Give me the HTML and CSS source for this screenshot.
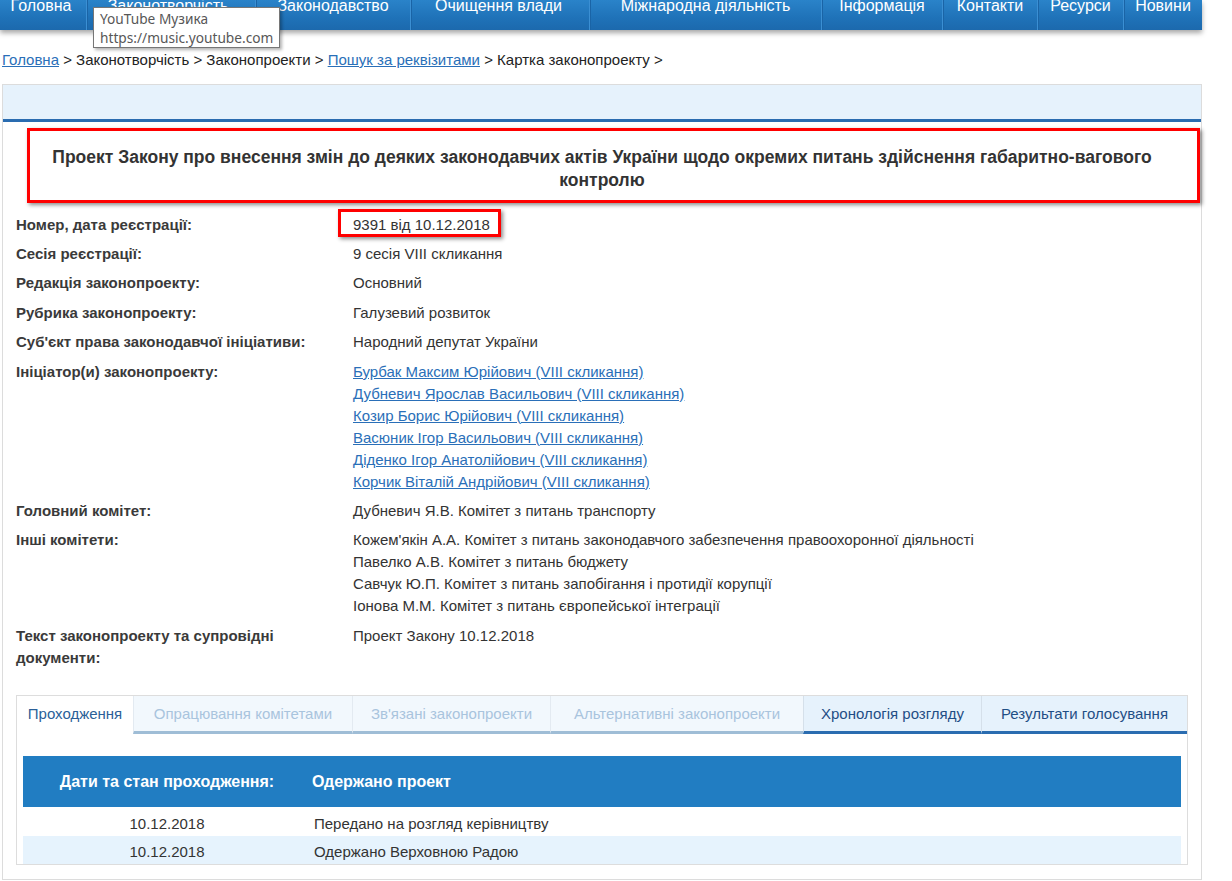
FILE: index.html
```html
<!DOCTYPE html>
<html lang="uk">
<head>
<meta charset="utf-8">
<title>Картка законопроекту</title>
<link rel="stylesheet" href="styles.css">
</head>
<body>
<div class="page">
  <nav class="topnav">
    <a class="nav-item">Головна</a>
    <a class="nav-item">Законотворчість</a>
    <a class="nav-item">Законодавство</a>
    <a class="nav-item">Очищення влади</a>
    <a class="nav-item">Міжнародна діяльність</a>
    <a class="nav-item">Інформація</a>
    <a class="nav-item">Контакти</a>
    <a class="nav-item">Ресурси</a>
    <a class="nav-item">Новини</a>
  </nav>

  <div class="tooltip">
    <div>YouTube Музика</div>
    <div>https://music.youtube.com</div>
  </div>

  <div class="breadcrumb">
    <a href="#">Головна</a> &gt; Законотворчість &gt; Законопроекти &gt; <a href="#">Пошук за реквізитами</a> &gt; Картка законопроекту &gt;
  </div>

  <div class="card">
    <div class="card-band"></div>
    <h1 class="bill-title">Проект Закону про внесення змін до деяких законодавчих актів України щодо окремих питань здійснення габаритно-вагового контролю</h1>

    <div class="props">
      <div class="prop">
        <div class="prop-label">Номер, дата реєстрації:</div>
        <div class="prop-value">9391 від 10.12.2018</div>
      </div>
      <div class="prop">
        <div class="prop-label">Сесія реєстрації:</div>
        <div class="prop-value">9 сесія VIII скликання</div>
      </div>
      <div class="prop">
        <div class="prop-label">Редакція законопроекту:</div>
        <div class="prop-value">Основний</div>
      </div>
      <div class="prop">
        <div class="prop-label">Рубрика законопроекту:</div>
        <div class="prop-value">Галузевий розвиток</div>
      </div>
      <div class="prop">
        <div class="prop-label">Суб'єкт права законодавчої ініціативи:</div>
        <div class="prop-value">Народний депутат України</div>
      </div>
      <div class="prop">
        <div class="prop-label">Ініціатор(и) законопроекту:</div>
        <div class="prop-value">
          <a class="line" href="#">Бурбак Максим Юрійович (VIII скликання)</a>
          <a class="line" href="#">Дубневич Ярослав Васильович (VIII скликання)</a>
          <a class="line" href="#">Козир Борис Юрійович (VIII скликання)</a>
          <a class="line" href="#">Васюник Ігор Васильович (VIII скликання)</a>
          <a class="line" href="#">Діденко Ігор Анатолійович (VIII скликання)</a>
          <a class="line" href="#">Корчик Віталій Андрійович (VIII скликання)</a>
        </div>
      </div>
      <div class="prop">
        <div class="prop-label">Головний комітет:</div>
        <div class="prop-value">Дубневич Я.В. Комітет з питань транспорту</div>
      </div>
      <div class="prop">
        <div class="prop-label">Інші комітети:</div>
        <div class="prop-value">
          <div class="line">Кожем'якін А.А. Комітет з питань законодавчого забезпечення правоохоронної діяльності</div>
          <div class="line">Павелко А.В. Комітет з питань бюджету</div>
          <div class="line">Савчук Ю.П. Комітет з питань запобігання і протидії корупції</div>
          <div class="line">Іонова М.М. Комітет з питань європейської інтеграції</div>
        </div>
      </div>
      <div class="prop">
        <div class="prop-label">Текст законопроекту та супровідні документи:</div>
        <div class="prop-value">Проект Закону 10.12.2018</div>
      </div>
    </div>

    <div class="tabs">
      <div class="tab-bar">
        <div class="tab tab-active">Проходження</div>
        <div class="tab tab-muted">Опрацювання комітетами</div>
        <div class="tab tab-muted">Зв'язані законопроекти</div>
        <div class="tab tab-muted">Альтернативні законопроекти</div>
        <div class="tab tab-strong">Хронологія розгляду</div>
        <div class="tab tab-strong">Результати голосування</div>
      </div>
      <table class="flow">
        <thead>
          <tr>
            <th class="col-date">Дати та стан проходження:</th>
            <th class="col-state">Одержано проект</th>
          </tr>
        </thead>
        <tbody>
          <tr>
            <td class="col-date">10.12.2018</td>
            <td class="col-state">Передано на розгляд керівництву</td>
          </tr>
          <tr class="alt">
            <td class="col-date">10.12.2018</td>
            <td class="col-state">Одержано Верховною Радою</td>
          </tr>
        </tbody>
      </table>
    </div>

    <div class="mark mark-title"></div>
    <div class="mark mark-number"></div>
  </div>
</div>
</body>
</html>
```
FILE: styles.css
```css
* { box-sizing: border-box; }

html, body {
  margin: 0;
  padding: 0;
  background: #ffffff;
}

body {
  font-family: "Liberation Sans", Arial, sans-serif;
  font-size: 15px;
  color: #333333;
  overflow: hidden;
}

.page {
  position: relative;
  width: 1202px;
}

/* top navigation */
.topnav {
  display: flex;
  height: 30px;
  background: linear-gradient(to bottom, #2a83c9 0%, #1f72b8 60%, #1c69ad 100%);
  box-shadow: 0 3px 5px rgba(0, 0, 0, 0.35);
  overflow: hidden;
}

.nav-item {
  display: block;
  color: #ffffff;
  font-size: 16px;
  line-height: 16px;
  margin-top: -2px;
  text-align: center;
  white-space: nowrap;
  height: 32px;
  border-left: 1px solid #3b8fd3;
  box-shadow: inset 1px 0 0 #1a64a6;
}
.nav-item:first-child { border-left: 0; box-shadow: none; }
.nav-item:nth-child(1) { width: 86px; padding-right: 4px; }
.nav-item:nth-child(2) { width: 169px; padding-right: 6px; }
.nav-item:nth-child(3) { width: 155px; }
.nav-item:nth-child(4) { width: 179px; padding-right: 3px; }
.nav-item:nth-child(5) { width: 232px; }
.nav-item:nth-child(6) { width: 121px; }
.nav-item:nth-child(7) { width: 95px; }
.nav-item:nth-child(8) { width: 86px; }
.nav-item:nth-child(9) { width: 79px; }

/* browser tooltip */
.tooltip {
  position: absolute;
  left: 93px;
  top: 7px;
  width: 187px;
  height: 41px;
  padding: 1px 0 0 6px;
  background: #ffffff;
  border: 1px solid #767676;
  box-shadow: 2px 2px 3px rgba(0, 0, 0, 0.3);
  font-family: "Noto Sans", "Open Sans", sans-serif;
  font-size: 13.7px;
  line-height: 19px;
  color: #575757;
  white-space: nowrap;
  z-index: 5;
}

/* breadcrumb */
.breadcrumb {
  margin: 21px 0 0 2px;
  height: 33px;
  line-height: 18px;
  font-size: 15px;
  color: #222222;
}
.breadcrumb a {
  color: #2a6fb8;
  text-decoration: underline;
}

/* main card */
.card {
  position: relative;
  margin-left: 2px;
  width: 1200px;
  border: 1px solid #dcdcdc;
  padding-bottom: 14px;
}

.card-band {
  height: 37px;
  background: #e6f2fc;
  border-bottom: 3px solid #2a6cb0;
}

.bill-title {
  margin: 0;
  padding: 24px 18px 18px;
  font-size: 17.5px;
  font-weight: bold;
  line-height: 23px;
  text-align: center;
  color: #333333;
}

.props {
  padding: 0 13px;
}

.prop {
  display: flex;
  padding: 3.7px 0;
  line-height: 22px;
}

.prop-label {
  flex: 0 0 337px;
  padding-right: 24px;
  font-weight: bold;
  color: #3a3a3a;
}

.prop-value {
  flex: 1 1 auto;
  color: #333333;
}

.prop-value .line {
  display: block;
}

.prop-value a {
  color: #2a6fb8;
  text-decoration: underline;
}

/* tabs */
.tabs {
  margin: 23px 13px 0;
  border: 1px solid #dddddd;
  padding: 0 6px;
}

.tab-bar {
  display: grid;
  grid-template-columns: 116px 219px 198px 253px 178px 1fr;
  margin: 0 -6px;
}

.tab {
  height: 38px;
  line-height: 36px;
  text-align: center;
  font-size: 15px;
  white-space: nowrap;
}

.tab-active {
  background: #ffffff;
  color: #2b5f98;
}

.tab-muted {
  background: #f2f8fd;
  color: #a9c4dd;
  border-left: 1px solid #e3eaf1;
  border-bottom: 3px solid #9fbdd6;
}

.tab-strong {
  background: #e6f2fc;
  color: #1f4e85;
  border-left: 1px solid #d5e0ea;
  border-bottom: 3px solid #2a6cb0;
}

.flow {
  width: 100%;
  margin-top: 22px;
  border-collapse: collapse;
  font-size: 15px;
}

.flow th {
  background: #217dc2;
  color: #ffffff;
  font-weight: bold;
  font-size: 16px;
  height: 51px;
  padding: 0;
  text-align: left;
}

.flow th.col-date,
.flow td.col-date {
  width: 288px;
  text-align: center;
}

.flow th.col-state { padding-left: 1px; }

.flow td {
  padding: 8px 0 3px;
  line-height: 18px;
  color: #333333;
}

.flow td.col-state { padding-left: 3px; }

.flow tr.alt td {
  background: #e6f3fd;
  padding-top: 7px;
}

/* red highlight annotations over the content */
.mark {
  position: absolute;
  border: 3px solid #ff0000;
  box-shadow: 2px 2px 4px rgba(0, 0, 0, 0.45);
  pointer-events: none;
}

.mark-title {
  left: 24px;
  top: 43px;
  width: 1173px;
  height: 75px;
}

.mark-number {
  left: 335px;
  top: 124px;
  width: 163px;
  height: 28px;
}
```
